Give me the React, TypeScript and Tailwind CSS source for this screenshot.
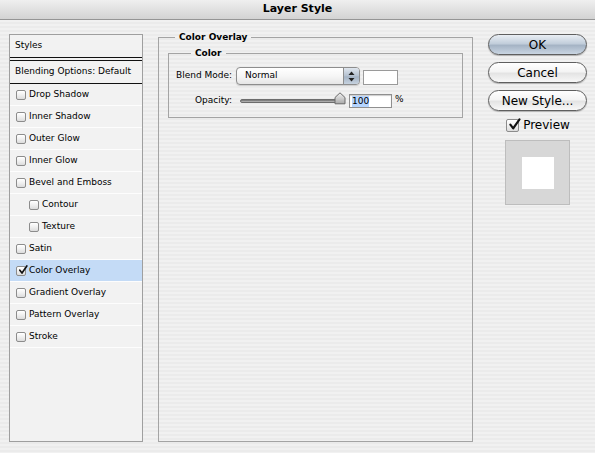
import React from "react";

const font = { fontFamily: '"DejaVu Sans", "Liberation Sans", sans-serif' };

function Check({ checked = false, size = 10 }: { checked?: boolean; size?: number }) {
  return (
    <span
      className="relative inline-block shrink-0 rounded-[2px] border border-[#8c8c8c] bg-[linear-gradient(180deg,#ffffff_0%,#f0f0f0_50%,#dcdcdc_100%)] shadow-[inset_0_1px_0_#fff]"
      style={{ width: size, height: size }}
    >
      {checked && (
        <svg
          viewBox="0 0 12 12"
          className="absolute left-[1px] top-[-2px]"
          style={{ width: size, height: size }}
        >
          <path d="M2.2 6.2 L4.8 9.6 L10.6 1.2" fill="none" stroke="#111" strokeWidth="2" strokeLinecap="round" strokeLinejoin="round" />
        </svg>
      )}
    </span>
  );
}

const items: { label: string; sub?: boolean; checked?: boolean }[] = [
  { label: "Drop Shadow" },
  { label: "Inner Shadow" },
  { label: "Outer Glow" },
  { label: "Inner Glow" },
  { label: "Bevel and Emboss" },
  { label: "Contour", sub: true },
  { label: "Texture", sub: true },
  { label: "Satin" },
  { label: "Color Overlay", checked: true },
  { label: "Gradient Overlay" },
  { label: "Pattern Overlay" },
  { label: "Stroke" },
];

function AquaButton({ label, primary = false }: { label: string; primary?: boolean }) {
  return (
    <div
      className={
        "flex h-[21px] w-[99px] items-center justify-center rounded-full border border-[#5f5f5f] text-[12px] leading-none text-black shadow-[0_1px_1px_rgba(0,0,0,0.25)] " +
        (primary
          ? "bg-[linear-gradient(180deg,#e9eef4_0%,#c2cedb_45%,#a5b4c5_55%,#c9d5e2_100%)]"
          : "bg-[linear-gradient(180deg,#ffffff_0%,#f4f4f4_45%,#e4e4e4_55%,#f8f8f8_100%)]")
      }
    >
      {label}
    </div>
  );
}

export default function App() {
  return (
    <div
      className="h-[453px] w-[595px] overflow-hidden bg-[repeating-linear-gradient(180deg,#f1f1f1_0px,#f1f1f1_2px,#ebebeb_2px,#ebebeb_4px)] text-black"
      style={font}
    >
      {/* Title bar */}
      <div className="flex h-[20px] items-center justify-center border-b border-[#959595] bg-[linear-gradient(180deg,#efefef_0%,#dedede_60%,#d3d3d3_100%)] text-[11px] font-bold">
        Layer Style
      </div>

      <div className="flex items-start">
        {/* Left styles list */}
        <div className="ml-[9px] mt-[14px] flex h-[408px] w-[134px] shrink-0 flex-col border border-[#9f9f9f] bg-[#f2f2f2] text-[9px]">
          <div className="flex h-[22px] items-center pl-[5px]">Styles</div>
          <div className="h-[1px] bg-[#111]" />
          <div className="h-[2px]" />
          <div className="h-[1px] bg-[#111]" />
          <div className="flex h-[22px] items-center pl-[5px]">Blending Options: Default</div>
          <div className="h-[1px] bg-[#111]" />
          {items.map((it) => (
            <div key={it.label} className="flex flex-col">
              <div
                className={
                  "flex h-[21px] items-center gap-[3px] " +
                  (it.sub ? "pl-[19px] " : "pl-[6px] ") +
                  (it.checked ? "bg-[#c4dbf6]" : "")
                }
              >
                <Check checked={it.checked} />
                <span>{it.label}</span>
              </div>
              <div className="h-[1px] bg-[#fdfdfd]" />
            </div>
          ))}
        </div>

        {/* Main fieldset */}
        <fieldset className="ml-[15px] mt-[11px] h-[411px] w-[315px] shrink-0 border border-[#a4a4a4]">
          <legend className="ml-[16px] px-[4px] text-[9px] font-bold leading-[12px]">Color Overlay</legend>
          <fieldset className="mx-[9px] mt-[4px] border border-[#a4a4a4] pb-[9px] pl-[7px]">
            <legend className="ml-[15px] px-[4px] text-[9px] font-bold leading-[12px]">Color</legend>
            <div className="mt-[8px] flex items-center text-[9px]">
              <div className="w-[56px] whitespace-nowrap text-right">Blend Mode:</div>
              <div className="ml-[4px] flex h-[18px] w-[124px] items-stretch overflow-hidden rounded-[4px] border border-[#8d8d8d] bg-[linear-gradient(180deg,#ffffff_0%,#f6f6f6_50%,#e6e6e6_100%)] shadow-[0_1px_1px_rgba(0,0,0,0.15)]">
                <div className="flex flex-1 items-center pl-[8px]">Normal</div>
                <div className="flex w-[16px] items-center justify-center border-l border-[#8d8d8d] bg-[linear-gradient(180deg,#dfe6ee_0%,#b3c0cf_50%,#a4b3c4_55%,#c6d2df_100%)]">
                  <svg width="7" height="11" viewBox="0 0 7 11">
                    <path d="M3.5 0.5 L6.5 4 L0.5 4 Z" fill="#222" />
                    <path d="M3.5 10.5 L6.5 7 L0.5 7 Z" fill="#222" />
                  </svg>
                </div>
              </div>
              <div className="ml-[3px] mt-[3px] h-[15px] w-[35px] border border-[#9a9a9a] bg-white" />
            </div>
            <div className="mt-[9px] flex items-center text-[9px]">
              <div className="w-[56px] whitespace-nowrap text-right">Opacity:</div>
              <div className="relative ml-[4px] flex h-[14px] w-[110px] items-center">
                <div className="ml-[4px] h-[4px] w-[100px] rounded-full border border-[#6d6d6d] bg-[linear-gradient(180deg,#6e6e6e_0%,#9a9a9a_60%,#c8c8c8_100%)]" />
                <svg className="absolute left-[98px] top-[-2px]" width="12" height="13" viewBox="0 0 12 13">
                  <defs>
                    <linearGradient id="th" x1="0" y1="0" x2="0" y2="1">
                      <stop offset="0" stopColor="#f2f2f2" />
                      <stop offset="1" stopColor="#a9a9a9" />
                    </linearGradient>
                  </defs>
                  <path d="M6 0.8 L11 5.5 L11 11.8 L1 11.8 L1 5.5 Z" fill="url(#th)" stroke="#6a6a6a" strokeWidth="1" strokeLinejoin="round" />
                </svg>
              </div>
              <div className="ml-[3px] flex h-[14px] w-[43px] items-center border border-[#8f8f8f] bg-white pl-[2px] shadow-[inset_0_1px_1px_rgba(0,0,0,0.2)]">
                <span className="bg-[#b5d5ff] leading-[11px]">100</span>
              </div>
              <span className="ml-[3px] -mt-[3px] text-[9px]">%</span>
            </div>
          </fieldset>
        </fieldset>

        {/* Right column */}
        <div className="ml-[15px] mt-[14px] flex w-[99px] shrink-0 flex-col items-center">
          <AquaButton label="OK" primary />
          <div className="h-[7px]" />
          <AquaButton label="Cancel" />
          <div className="h-[7px]" />
          <AquaButton label="New Style..." />
          <div className="mt-[7px] flex items-center gap-[4px] pl-[1px] text-[12px] leading-[14px]">
            <Check checked size={13} />
            <span>Preview</span>
          </div>
          <div className="mt-[8px] flex h-[65px] w-[65px] items-center justify-center border border-[#bdbdbd] bg-[#d7d7d7]">
            <div className="h-[32px] w-[32px] bg-white" />
          </div>
        </div>
      </div>
    </div>
  );
}
